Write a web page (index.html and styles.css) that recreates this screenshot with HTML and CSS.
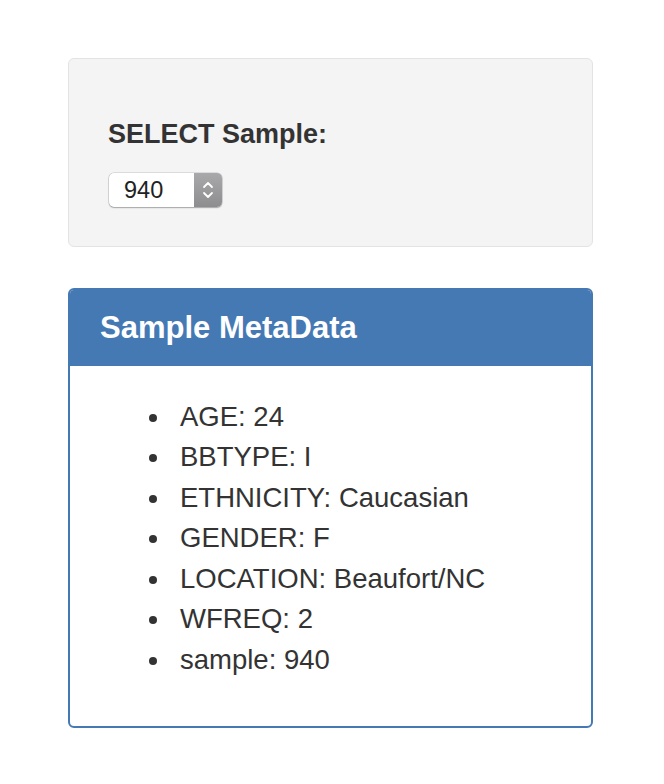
FILE: index.html
```
<!DOCTYPE html>
<html>
<head>
<meta charset="utf-8">
<link rel="stylesheet" href="styles.css">
</head>
<body>
<div class="page">
  <div class="well">
    <label class="select-label" for="selDataset">SELECT Sample:</label>
    <div class="select">
      <span class="select-value">940</span>
      <span class="stepper">
        <svg width="14" height="22" viewBox="0 0 14 22">
          <path d="M3 8 L7 4 L11 8" fill="none" stroke="#fff" stroke-width="1.8" stroke-linecap="round" stroke-linejoin="round"/>
          <path d="M3 14 L7 18 L11 14" fill="none" stroke="#fff" stroke-width="1.8" stroke-linecap="round" stroke-linejoin="round"/>
        </svg>
      </span>
    </div>
  </div>
  <div class="panel">
    <div class="panel-heading">
      <h3 class="panel-title">Sample MetaData</h3>
    </div>
    <div class="panel-body">
      <ul class="meta-list">
        <li>AGE: 24</li>
        <li>BBTYPE: I</li>
        <li>ETHNICITY: Caucasian</li>
        <li>GENDER: F</li>
        <li>LOCATION: Beaufort/NC</li>
        <li>WFREQ: 2</li>
        <li>sample: 940</li>
      </ul>
    </div>
  </div>
</div>
</body>
</html>
```
FILE: styles.css
```
html, body {
  margin: 0;
  padding: 0;
  background: #fff;
}
body {
  font-family: "Liberation Sans", Arial, sans-serif;
  color: #333;
}
.page {
  width: 525px;
  margin-left: 68px;
  padding-top: 58px;
  display: flex;
  flex-direction: column;
  gap: 41px;
}
.well {
  box-sizing: border-box;
  height: 189px;
  background: #f4f4f4;
  border: 1px solid #e3e3e3;
  border-radius: 6px;
  padding: 0 0 0 39px;
  display: flex;
  flex-direction: column;
  align-items: flex-start;
}
.select-label {
  font-weight: bold;
  font-size: 27px;
  line-height: 30px;
  margin-top: 60px;
  color: #333;
}
.select {
  margin-top: 24px;
  margin-left: 1px;
  box-sizing: border-box;
  width: 113px;
  height: 34px;
  border-radius: 5px;
  background: #fff;
  box-shadow: 0 0 0 0.5px rgba(0,0,0,0.2), 0 1px 1.5px rgba(0,0,0,0.25);
  display: flex;
  align-items: stretch;
  overflow: hidden;
}
.select-value {
  flex: 1;
  font-size: 23.5px;
  line-height: 34px;
  padding-left: 15px;
  color: #222;
}
.stepper {
  width: 28px;
  background: linear-gradient(#a9a9ac, #8d8d90);
  display: flex;
  align-items: center;
  justify-content: center;
}
.panel {
  box-sizing: border-box;
  height: 440px;
  border: 2px solid #4479b4;
  border-radius: 6px;
  overflow: hidden;
  background: #fff;
}
.panel-heading {
  box-sizing: border-box;
  height: 76px;
  background: #4479b4;
  padding-left: 30px;
  display: flex;
  align-items: center;
}
.panel-title {
  margin: 0;
  color: #fff;
  font-size: 31px;
  font-weight: bold;
  line-height: 34px;
}
.panel-body {
  padding-top: 30.5px;
}
.meta-list {
  margin: 0;
  padding-left: 110px;
  font-size: 27.5px;
  line-height: 40.5px;
  color: #333;
  list-style: none;
}
.meta-list li::before {
  content: "";
  display: inline-block;
  width: 8px;
  height: 8px;
  border-radius: 50%;
  background: #333;
  margin-left: -31px;
  margin-right: 23px;
  vertical-align: 3.7px;
}
```
